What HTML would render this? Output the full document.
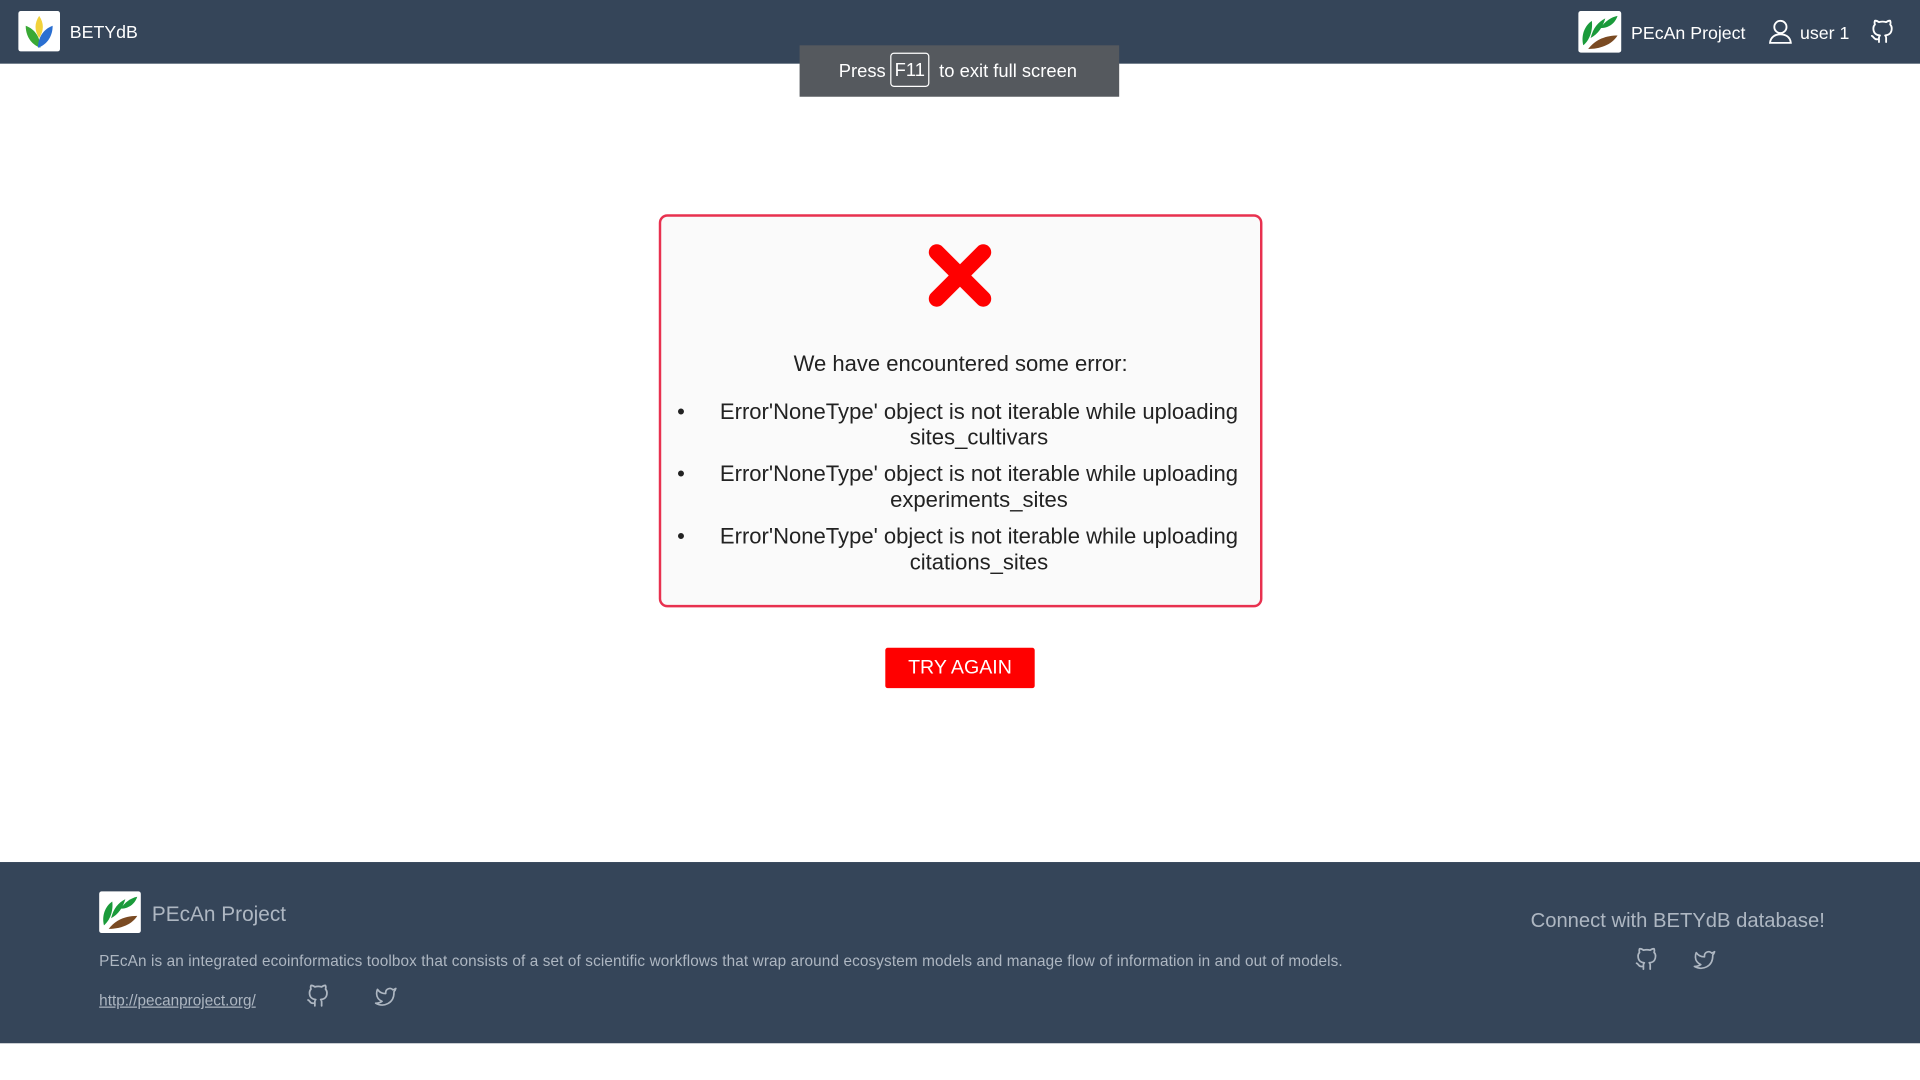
<!DOCTYPE html>
<html><head><meta charset="utf-8"><style>
html,body{margin:0;padding:0;width:1920px;height:1080px;overflow:hidden;background:#fff}
#w{width:1568px;height:882px;transform:scale(1.22449);transform-origin:0 0;position:relative;font-family:"Liberation Sans",sans-serif}
.hd{position:absolute;left:0;top:0;width:1568px;height:52px;background:#354559}
.ft{position:absolute;left:0;top:704px;width:1568px;height:148px;background:#354559;color:#aeb7c2}
.abs{position:absolute}
.logo{position:absolute;background:#fff;border-radius:2px}
</style></head><body><div id="w">
<div class="hd">
 <div class="logo" style="left:15px;top:9px;width:34px;height:33px">
  <svg width="34" height="33" viewBox="0 0 34 33"><path d="M17 4 C13 10 13 16 17 22 C21 16 21 10 17 4Z" fill="#f2d23a"/><path d="M6 12 C6 22 12 28 18 30 C18 22 14 15 6 12Z" fill="#3aa935"/><path d="M28 12 C28 22 22 28 16 30 C16 22 20 15 28 12Z" fill="#2a6fd1"/></svg>
 </div>
 <div class="abs" style="left:57px;top:19px;color:#fff;font-size:14.5px">BETYdB</div>
 <div class="logo" style="left:1289px;top:9px;width:35px;height:34px">
  <svg width="35" height="34" viewBox="0 0 35 34"><path d="M4 28 C2 20 5 12 11 8 C12 16 9 24 4 28Z" fill="#1a9a3a"/><path d="M10 22 C12 14 16 9 22 6 C20 13 16 19 10 22Z" fill="#1a9a3a"/><path d="M18 14 C22 8 27 5 32 4 C30 10 25 14 18 14Z" fill="#1a9a3a"/><path d="M8 31 C14 23 23 20 32 20 C27 28 17 31 8 31Z" fill="#7a4a22"/></svg>
 </div>
 <div class="abs" style="left:1332px;top:20px;color:#fff;font-size:14.5px">PEcAn Project</div>
 <svg class="abs" style="left:1444px;top:16px" width="20" height="20" viewBox="0 0 20 20" fill="none" stroke="#fff" stroke-width="1.5"><circle cx="10" cy="6" r="5"/><path d="M1.5 19 C2 14 6 12 10 12 C14 12 18 14 18.5 19Z"/></svg>
 <div class="abs" style="left:1470px;top:20px;color:#fff;font-size:14.5px">user 1</div>
 <svg class="abs" style="left:1527px;top:16px" width="20" height="20" viewBox="0 0 24 24" fill="none" stroke="#fff" stroke-width="1.8" stroke-linecap="round" stroke-linejoin="round"><path d="M9 19c-5 1.5-5-2.5-7-3m14 6v-3.870a3.37 3.37 0 0 0-.94-2.61c3.14-.35 6.44-1.54 6.44-7A5.44 5.440 0 0 0 20 4.77 5.07 5.07 0 0 0 19.91 1S18.73.65 16 2.48a13.38 13.38 0 0 0-7 0C6.27.65 5.09 1 5.09 1A5.07 5.07 0 0 0 5 4.77a5.44 5.44 0 0 0-1.5 3.78c0 5.42 3.3 6.61 6.44 7A3.37 3.37 0 0 0 9 18.13V22"/></svg>
</div>
<div class="abs" style="left:653px;top:37px;width:261px;height:42px;background:#55595e;color:#fff;font-size:15px">
 <span class="abs" style="left:32px;top:13px">Press</span>
 <span class="abs" style="left:74px;top:6px;width:32px;height:28px;border:1px solid #fff;border-radius:3px;box-sizing:border-box;text-align:center;line-height:27px">F11</span>
 <span class="abs" style="left:114px;top:13px">to exit full screen</span>
</div>
<div class="abs" style="left:538px;top:175px;width:493px;height:321px;box-sizing:border-box;border:2px solid #e8314f;border-radius:7px;background:#fafafa"></div>
<svg class="abs" style="left:757px;top:198px" width="54" height="54" viewBox="0 0 54 54"><path d="M8 8 L46 46 M46 8 L8 46" stroke="#f00" stroke-width="13" stroke-linecap="round"/></svg>
<div class="abs" style="left:539px;top:287px;width:491px;text-align:center;font-size:18px;color:#222">We have encountered some error:</div>
<div class="abs" style="left:539px;top:326px;width:491px;font-size:18px;color:#222;line-height:21px">
 <div style="position:relative;height:51px"><span class="abs" style="left:14px">•</span><div style="position:absolute;left:40px;right:10px;text-align:center">Error'NoneType' object is not iterable while uploading sites_cultivars</div></div>
 <div style="position:relative;height:51px"><span class="abs" style="left:14px">•</span><div style="position:absolute;left:40px;right:10px;text-align:center">Error'NoneType' object is not iterable while uploading experiments_sites</div></div>
 <div style="position:relative;height:51px"><span class="abs" style="left:14px">•</span><div style="position:absolute;left:40px;right:10px;text-align:center">Error'NoneType' object is not iterable while uploading citations_sites</div></div>
</div>
<div class="abs" style="left:723px;top:529px;width:122px;height:33px;background:#f00;border-radius:2px;color:#fff;font-size:16px;text-align:center;line-height:33px">TRY AGAIN</div>
<div class="ft">
 <div class="logo" style="left:81px;top:24px;width:34px;height:34px">
  <svg width="34" height="34" viewBox="0 0 35 34"><path d="M4 28 C2 20 5 12 11 8 C12 16 9 24 4 28Z" fill="#1a9a3a"/><path d="M10 22 C12 14 16 9 22 6 C20 13 16 19 10 22Z" fill="#1a9a3a"/><path d="M18 14 C22 8 27 5 32 4 C30 10 25 14 18 14Z" fill="#1a9a3a"/><path d="M8 31 C14 23 23 20 32 20 C27 28 17 31 8 31Z" fill="#7a4a22"/></svg>
 </div>
 <div class="abs" style="left:124px;top:33px;font-size:17px">PEcAn Project</div>
 <div class="abs" style="left:81px;top:74px;font-size:12.5px;white-space:nowrap;letter-spacing:0.1px">PEcAn is an integrated ecoinformatics toolbox that consists of a set of scientific workflows that wrap around ecosystem models and manage flow of information in and out of models.</div>
 <div class="abs" style="left:81px;top:106px;font-size:12.5px;text-decoration:underline">http://pecanproject.org/</div>
 <svg class="abs" style="left:250px;top:100px" width="19" height="19" viewBox="0 0 24 24" fill="none" stroke="#aeb7c2" stroke-width="1.8" stroke-linecap="round" stroke-linejoin="round"><path d="M9 19c-5 1.5-5-2.5-7-3m14 6v-3.87a3.37 3.37 0 0 0-.94-2.61c3.14-.35 6.44-1.54 6.44-7A5.44 5.44 0 0 0 20 4.77 5.07 5.07 0 0 0 19.91 1S18.73.65 16 2.48a13.38 13.38 0 0 0-7 0C6.270.65 5.09 1 5.09 1A5.07 5.07 0 0 0 5 4.77a5.44 5.44 0 0 0-1.5 3.78c0 5.42 3.3 6.61 6.44 7A3.37 3.37 0 0 0 9 18.13V22"/></svg>
 <svg class="abs" style="left:305px;top:101px" width="20" height="18" viewBox="0 0 24 24" fill="none" stroke="#aeb7c2" stroke-width="1.8" stroke-linejoin="round"><path d="M23 3a10.9 10.9 0 0 1-3.14 1.53 4.48 4.48 0 0 0-7.86 3v1A10.66 10.66 0 0 1 3 4s-4 9 5 13a11.64 11.64 0 0 1-7 2c9 5 20 0 20-11.5a4.5 4.5 0 0 0-.08-.83A7.72 7.72 0 0 0 23 3z"/></svg>
 <div class="abs" style="left:1250px;top:39px;font-size:16.5px">Connect with BETYdB database!</div>
 <svg class="abs" style="left:1335px;top:70px" width="19" height="19" viewBox="0 0 24 24" fill="none" stroke="#aeb7c2" stroke-width="1.8" stroke-linecap="round" stroke-linejoin="round"><path d="M9 19c-5 1.5-5-2.5-7-3m14 6v-3.87a3.37 3.37 0 0 0-.94-2.61c3.14-.35 6.44-1.54 6.44-7A5.44 5.44 0 0 0 20 4.77 5.07 5.07 0 0 0 19.91 1S18.73.65 16 2.48a13.38 13.38 0 0 0-7 0C6.27.65 5.09 1 5.09 1A5.07 5.07 0 0 0 5 4.77a5.44 5.44 0 0 0-1.5 3.78c0 5.42 3.3 6.61 6.44 7A3.37 3.37 0 0 0 9 18.13V22"/></svg>
 <svg class="abs" style="left:1382px;top:71px" width="20" height="18" viewBox="0 0 24 24" fill="none" stroke="#aeb7c2" stroke-width="1.8" stroke-linejoin="round"><path d="M23 3a10.9 10.9 0 0 1-3.14 1.53 4.48 4.48 0 0 0-7.86 3v1A10.66 10.66 0 0 1 3 4s-4 9 5 13a11.64 11.64 0 0 1-7 2c9 5 20 0 20-11.5a4.5 4.5 0 0 0-.08-.83A7.72 7.72 0 0 0 23 3z"/></svg>
</div>
</div></body></html>
